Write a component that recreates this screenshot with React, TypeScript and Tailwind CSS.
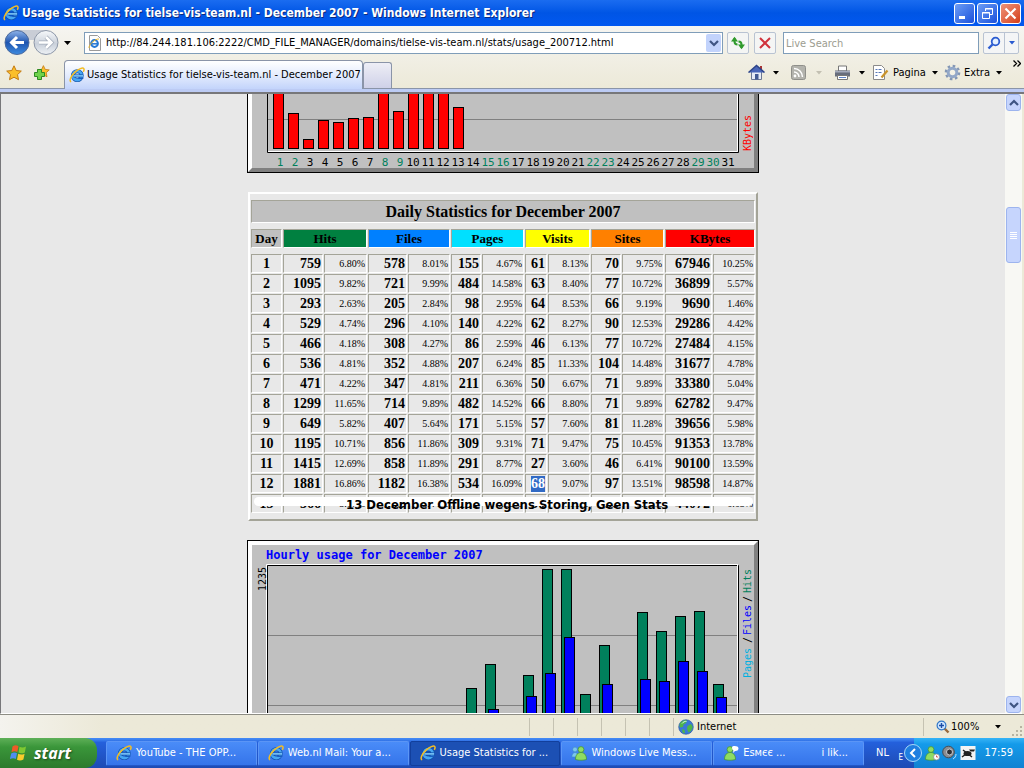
import type { ReactNode } from 'react';

const DAYS = [
  ['1', '759', '6.80%', '578', '8.01%', '155', '4.67%', '61', '8.13%', '70', '9.75%', '67946', '10.25%'],
  ['2', '1095', '9.82%', '721', '9.99%', '484', '14.58%', '63', '8.40%', '77', '10.72%', '36899', '5.57%'],
  ['3', '293', '2.63%', '205', '2.84%', '98', '2.95%', '64', '8.53%', '66', '9.19%', '9690', '1.46%'],
  ['4', '529', '4.74%', '296', '4.10%', '140', '4.22%', '62', '8.27%', '90', '12.53%', '29286', '4.42%'],
  ['5', '466', '4.18%', '308', '4.27%', '86', '2.59%', '46', '6.13%', '77', '10.72%', '27484', '4.15%'],
  ['6', '536', '4.81%', '352', '4.88%', '207', '6.24%', '85', '11.33%', '104', '14.48%', '31677', '4.78%'],
  ['7', '471', '4.22%', '347', '4.81%', '211', '6.36%', '50', '6.67%', '71', '9.89%', '33380', '5.04%'],
  ['8', '1299', '11.65%', '714', '9.89%', '482', '14.52%', '66', '8.80%', '71', '9.89%', '62782', '9.47%'],
  ['9', '649', '5.82%', '407', '5.64%', '171', '5.15%', '57', '7.60%', '81', '11.28%', '39656', '5.98%'],
  ['10', '1195', '10.71%', '856', '11.86%', '309', '9.31%', '71', '9.47%', '75', '10.45%', '91353', '13.78%'],
  ['11', '1415', '12.69%', '858', '11.89%', '291', '8.77%', '27', '3.60%', '46', '6.41%', '90100', '13.59%'],
  ['12', '1881', '16.86%', '1182', '16.38%', '534', '16.09%', '68', '9.07%', '97', '13.51%', '98598', '14.87%'],
  ['13', '566', '5.07%', '393', '5.44%', '151', '4.55%', '30', '4.00%', '50', '6.96%', '44072', '6.65%'],
];

const GROUPS = [
  { name: 'Hits', color: 'bg-[#008040]' },
  { name: 'Files', color: 'bg-[#0080ff]' },
  { name: 'Pages', color: 'bg-[#00e0ff]' },
  { name: 'Visits', color: 'bg-[#ffff00]' },
  { name: 'Sites', color: 'bg-[#ff8000]' },
  { name: 'KBytes', color: 'bg-[#ff0000]' },
];

// tops of the daily KBytes bars, bars 1, 8, 10, 11 and 12 run off the top
const DAILY_TOPS = [-4, 19, 45, 26, 28, 24, 23, -4, 17, -4, -4, -4, 13];
const WEEKEND = [1, 2, 8, 9, 15, 16, 22, 23, 29, 30];

const HOURLY = [
  { x: 219, hits: 148 },
  { x: 238, hits: 124, files: 169 },
  { x: 276, hits: 135, files: 156 },
  { x: 295, hits: 29, files: 133 },
  { x: 314, hits: 29, files: 97 },
  { x: 333, hits: 154 },
  { x: 352, hits: 105, files: 144 },
  { x: 390, hits: 72, files: 139 },
  { x: 409, hits: 91, files: 141 },
  { x: 428, hits: 76, files: 121 },
  { x: 447, hits: 71, files: 131 },
  { x: 466, hits: 144, files: 157 },
];

const MONO = '"DejaVu Sans Mono", monospace';

function IeLogo() {
  return (
    <svg width="16" height="16" viewBox="0 0 16 16" className="shrink-0" aria-hidden="true">
      <circle cx="8.3" cy="8.6" r="4.4" fill="none" stroke="#0f4fa8" strokeWidth="4" />
      <circle cx="8.3" cy="8.6" r="4.4" fill="none" stroke="#46a6f2" strokeWidth="2.8" />
      <path d="M4.500 8.900h9.300" stroke="#0f4fa8" strokeWidth="3" />
      <path d="M4.500 8.900h9.600" stroke="#7cc8fb" strokeWidth="1.600" />
      <path d="M9.500 10.800h5.200l-.6 1.200H9z" fill="#1a5cc0" />
      <path d="M2.200 14.800c-2.400-.6-.4-5.600 3.600-9.400C9.600 1.800 13.800.2 14.800 1.600c.5.8.2 2-.5 3.200" fill="none" stroke="#f3bd25" strokeWidth="1.500" />
    </svg>
  );
}

function Caret({ color = '#000' }: { color?: string }) {
  return (
    <svg width="6" height="4" viewBox="0 0 6 4" className="shrink-0" aria-hidden="true">
      <path d="M0 0h6L3 3.500z" fill={color} />
    </svg>
  );
}

function Chevron({ up = false }: { up?: boolean }) {
  return (
    <svg width="10" height="8" viewBox="0 0 10 8" aria-hidden="true">
      <path d={up ? 'M1 6l4-4 4 4' : 'M1 2l4 4 4-4'} fill="none" stroke="#3f5583" strokeWidth="2.200" />
    </svg>
  );
}

function StarShape({ x, y, scale }: { x: number; y: number; scale: number }) {
  return (
    <path
      transform={`translate(${x} ${y}) scale(${scale})`}
      d="M8 .8l2.200 4.700 5.100.6-3.800 3.500 1 5.100L8 12.200l-4.500 2.500 1-5.100L.7 6.100l5.100-.6z"
      fill="#fbbf2b"
      stroke="#c47a10"
      strokeWidth="1"
    />
  );
}

function Messenger({ pair = false, bubble = false, clock = false }: { pair?: boolean; bubble?: boolean; clock?: boolean }) {
  return (
    <svg width="16" height="16" viewBox="0 0 16 16" className="shrink-0" aria-hidden="true">
      {pair && (
        <g fill="#7cc6ee" stroke="#3a86c4" strokeWidth=".6">
          <circle cx="4" cy="4.500" r="2.400" />
          <path d="M.8 12c0-6 6.400-6 6.400 0z" />
        </g>
      )}
      <g transform={pair ? 'translate(3 0)' : ''} fill="#8fdc63" stroke="#3f9130" strokeWidth=".7">
        <circle cx="7" cy="4.500" r="2.900" />
        <path d="M1.500 14.500C1.500 9.500 4 7.500 7 7.500s5.500 2 5.500 7c-3 1-8 1-11 0z" />
      </g>
      {bubble && <path d="M9 2.500C9 .5 15.500.5 15.500 3.500c0 2-2 2.600-3.500 2.400L10 8l.5-2.600C9.500 5 9 4 9 2.500z" fill="#fff" />}
      {clock && (
        <g>
          <circle cx="12.500" cy="12" r="3" fill="#fff" stroke="#888" strokeWidth=".7" />
          <path d="M12.500 10.500V12H14" fill="none" stroke="#c33" strokeWidth=".8" />
        </g>
      )}
    </svg>
  );
}

function TitleBar() {
  return (
    <header className="flex h-[26px] shrink-0 items-center bg-linear-to-b from-[#1a6cf0] via-[#0055e5] to-[#0258f0] px-[3px]">
      <IeLogo />
      <h1 className="ml-[3px] flex-1 truncate text-[12px] font-bold text-white [text-shadow:1px_1px_0_#0a2a80]">
        Usage Statistics for tielse-vis-team.nl - December 2007 - Windows Internet Explorer
      </h1>
      <div className="flex gap-[2px]">
        <button aria-label="Minimize" className="flex size-[21px] items-center justify-center rounded-[3px] border border-white bg-linear-to-br from-[#6c9cf5] to-[#1c4fdb]">
          <svg width="15" height="15" viewBox="0 0 15 15"><path d="M2 10h6v3H2z" fill="#fff" /></svg>
        </button>
        <button aria-label="Restore" className="flex size-[21px] items-center justify-center rounded-[3px] border border-white bg-linear-to-br from-[#6c9cf5] to-[#1c4fdb]">
          <svg width="15" height="15" viewBox="0 0 15 15" fill="none" stroke="#fff">
            <path d="M5.500 5V2.500h7v6H10M5 3h8" />
            <path d="M2.500 6.500h7v6h-7zM2 7h8" />
          </svg>
        </button>
        <button aria-label="Close" className="flex size-[21px] items-center justify-center rounded-[3px] border border-white bg-linear-to-br from-[#ee9277] to-[#d33b12]">
          <svg width="15" height="15" viewBox="0 0 15 15"><path d="M2.500 2.500l10 10m0-10l-10 10" stroke="#fff" strokeWidth="2.200" /></svg>
        </button>
      </div>
    </header>
  );
}

function AddressRow() {
  return (
    <div className="flex h-[34px] shrink-0 items-center pr-[5px] pl-[4px]">
      <svg width="56" height="30" viewBox="0 0 56 30" role="img" aria-label="Back and forward" className="shrink-0">
        <defs>
          <linearGradient id="back" x1="0" y1="0" x2="0" y2="1">
            <stop offset="0" stopColor="#8fb4ea" />
            <stop offset=".5" stopColor="#1f55b0" />
            <stop offset="1" stopColor="#3d8be0" />
          </linearGradient>
          <linearGradient id="forward" x1="0" y1="0" x2="0" y2="1">
            <stop offset="0" stopColor="#f7f9fb" />
            <stop offset=".55" stopColor="#c9d0da" />
            <stop offset="1" stopColor="#eef2f6" />
          </linearGradient>
        </defs>
        <path d="M13 2h29v10H13z" fill="#c9cdd6" />
        <circle cx="13" cy="14.500" r="12" fill="url(#back)" stroke="#4d6a9c" />
        <circle cx="42" cy="14.500" r="12" fill="url(#forward)" stroke="#8d97a8" />
        <path d="M20 14.500H8m5-5.500l-5.500 5.500L13 20" fill="none" stroke="#fff" strokeWidth="3" />
        <path d="M35 14.500h12M42 9l5.500 5.500L42 20" fill="none" stroke="#a3acba" strokeWidth="4" />
        <path d="M35 14.500h12M42 9l5.500 5.500L42 20" fill="none" stroke="#fff" strokeWidth="2.500" />
      </svg>
      <button aria-label="Recent pages" className="flex w-[14px] justify-center">
        <svg width="7" height="4" viewBox="0 0 7 4"><path d="M0 0h7L3.500 4z" /></svg>
      </button>
      <div className="ml-[10px] flex h-[22px] flex-1 items-center border border-[#7f9db9] bg-white pr-px pl-[2px]">
        <svg width="16" height="16" viewBox="0 0 16 16" className="mr-[3px] shrink-0" aria-hidden="true">
          <path d="M2.500.5h8l3 3v12h-11z" fill="#fdfdfd" stroke="#9a9a9a" />
          <circle cx="7.500" cy="8.500" r="3.400" fill="none" stroke="#2477d4" strokeWidth="2" />
          <path d="M5 8.800h5.800" stroke="#2477d4" strokeWidth="1.500" />
          <path d="M2 13c-.5-3 6-9.500 10-9" fill="none" stroke="#e8b62e" />
        </svg>
        <input
          aria-label="Address"
          className="min-w-0 flex-1 bg-transparent text-[11px] text-black outline-none"
          defaultValue="http://84.244.181.106:2222/CMD_FILE_MANAGER/domains/tielse-vis-team.nl/stats/usage_200712.html"
        />
        <button aria-label="Show addresses" className="flex h-[18px] w-[15px] items-center justify-center rounded-[2px] bg-[#c2d3fc]">
          <Chevron />
        </button>
      </div>
      <button aria-label="Refresh" className="ml-[4px] flex size-[22px] items-center justify-center rounded-[2px] border border-[#b9c3d2] bg-[#f4f5f4]">
        <svg width="16" height="14" viewBox="0 0 16 14" fill="none" stroke="#2f9a2c" strokeWidth="2">
          <path d="M4.500 2v3.500c0 2 1 3 3 3" />
          <path d="M1 5.500L4.500.8 8 5.500z" fill="#2f9a2c" stroke="none" />
          <path d="M11.500 12V8.500c0-2-1-3-3-3" />
          <path d="M8 8.500l3.500 4.700L15 8.500z" fill="#2f9a2c" stroke="none" />
        </svg>
      </button>
      <button aria-label="Stop" className="ml-[5px] flex size-[22px] items-center justify-center rounded-[2px] border border-[#b9c3d2] bg-[#f4f5f4]">
        <svg width="14" height="14" viewBox="0 0 14 14"><path d="M2 2l10 10M12 2L2 12" stroke="#d0323c" strokeWidth="2" /></svg>
      </button>
      <input
        aria-label="Live Search"
        placeholder="Live Search"
        className="ml-[7px] h-[22px] w-[196px] border border-[#7f9db9] bg-white px-[2px] text-[11px] outline-none placeholder:text-[#9c9c90]"
      />
      <div className="ml-[4px] flex h-[22px] w-[36px] rounded-[2px] border border-[#b9c3d2] bg-[#f4f5f6]">
        <button aria-label="Search" className="flex w-[21px] items-center justify-center border-r border-[#b9c3d2]">
          <svg width="14" height="14" viewBox="0 0 14 14" fill="none" stroke="#2a5bd0">
            <circle cx="8.500" cy="5.500" r="3.800" strokeWidth="1.800" fill="#e4f0ff" />
            <path d="M5.500 8.500L1.500 12.500" strokeWidth="2.400" />
          </svg>
        </button>
        <button aria-label="Search options" className="flex flex-1 items-center justify-center"><Caret color="#2a5bd0" /></button>
      </div>
    </div>
  );
}

function TabRow() {
  return (
    <div className="flex h-[29px] shrink-0 items-end border-b border-[#8a94a8]">
      <div className="flex h-[28px] items-center gap-[10px] pb-[3px] pl-[6px]">
        <button aria-label="Favorites">
          <svg width="17" height="16" viewBox="0 0 17 16"><StarShape x={0} y={0} scale={1} /></svg>
        </button>
        <button aria-label="Add to favorites">
          <svg width="17" height="16" viewBox="0 0 17 16">
            <StarShape x={4} y={0} scale={0.8} />
            <path d="M4.500 4.500h4v3h3v4h-3v3h-4v-3h-3v-4h3z" fill="#6fd24a" stroke="#2c8a22" />
          </svg>
        </button>
      </div>
      <div className="-mb-px ml-[14px] flex h-[29px] w-[299px] items-center gap-[2px] rounded-t-[4px] border border-b-0 border-[#8a94a8] bg-linear-to-b from-white via-[#e4ecfd] to-[#c3d4fb] pl-[4px]">
        <IeLogo />
        <a href="#stats" className="truncate text-[11px] text-black">Usage Statistics for tielse-vis-team.nl - December 2007</a>
      </div>
      <button aria-label="New tab" className="h-[26px] w-[29px] rounded-t-[3px] border border-b-0 border-[#8a94a8] bg-linear-to-b from-[#eeeef6] to-[#cfd1e8]" />
      <div className="ml-auto flex h-[28px] items-center pb-[3px] text-[11px]">
        <button aria-label="Home" className="flex items-center gap-[8px]">
          <svg width="17" height="17" viewBox="0 0 17 17">
            <path d="M3.500 7.500h10v8h-10z" fill="#e7ecf6" stroke="#6c7894" />
            <path d="M12 2h2v4h-2z" fill="#a33" />
            <path d="M.5 8.500L8.500 1.500l8 7" fill="#4a66b8" stroke="#2d4488" strokeWidth="1.500" />
            <path d="M7 10h3.500v5.500H7z" fill="#435a92" />
          </svg>
          <Caret />
        </button>
        <button aria-label="Feeds" className="ml-[12px] flex items-center gap-[10px]">
          <svg width="15" height="15" viewBox="0 0 15 15">
            <rect x=".5" y=".5" width="14" height="14" rx="2" fill="#b3b3ad" stroke="#8f8f8a" />
            <circle cx="4" cy="11" r="1.400" fill="#fff" />
            <path d="M3 7a5 5 0 0 1 5 5M3 3.500a8.500 8.500 0 0 1 8.500 8.500" fill="none" stroke="#fff" strokeWidth="1.500" />
          </svg>
          <Caret color="#c3c0b2" />
        </button>
        <button aria-label="Print" className="ml-[12px] flex items-center gap-[8px]">
          <svg width="17" height="16" viewBox="0 0 17 16">
            <path d="M4.500 1h8v5h-8z" fill="#fff" stroke="#777" />
            <path d="M1 5.500h15v6H1z" fill="#676d7c" />
            <path d="M1 6h15v1.500H1z" fill="#a4aabb" />
            <path d="M3.500 10.500h10v4h-10z" fill="#fff" stroke="#777" />
            <path d="M5 12.500h7" stroke="#5d83c8" />
          </svg>
          <Caret />
        </button>
        <button className="ml-[7px] flex items-center">
          <svg width="17" height="17" viewBox="0 0 17 17" className="mr-[4px]">
            <path d="M1.500 1.500h8l3 3v11h-11z" fill="#fff" stroke="#8a8a8a" />
            <path d="M3.500 5.500h2m1 0h3m-6 3h2m1 0h3m-6 3h2" stroke="#5878b8" />
            <path d="M15.500 6.500l-6 7" stroke="#c9932b" strokeWidth="2.200" />
          </svg>
          Pagina
          <span className="ml-[6px]"><Caret /></span>
        </button>
        <button className="ml-[6px] flex items-center">
          <svg width="17" height="17" viewBox="0 0 17 17" className="mr-[3px]">
            <circle cx="8.500" cy="8.500" r="6.600" fill="none" stroke="#8396b4" strokeWidth="2.400" strokeDasharray="2.600 2.580" />
            <circle cx="8.500" cy="8.500" r="4.300" fill="#f4f2e6" stroke="#93a8c8" strokeWidth="3" />
          </svg>
          Extra
          <span className="ml-[6px]"><Caret /></span>
        </button>
        <button aria-label="More commands" className="mr-[3px] ml-[11px] self-start">
          <svg width="8" height="7" viewBox="0 0 8 7" fill="none" stroke="#000" strokeWidth="1.300"><path d="M.5.5l3 3-3 3m4-6l3 3-3 3" /></svg>
        </button>
      </div>
    </div>
  );
}

function DailyChart() {
  return (
    <svg width="512" height="79" viewBox="0 0 512 79" className="shrink-0" role="img" aria-label="Daily usage in KBytes" fontFamily={MONO}>
      <path d="M0 0h512v79H0z" fill="#000" />
      <path d="M1 0h510v78H1z" fill="#808080" />
      <path d="M1 0h4v74l-4 4z" fill="#fff" />
      <path d="M5 0h502v74H5z" fill="#c0c0c0" />
      <path d="M20.500 -1v59.500h471V-1" fill="none" stroke="#000" />
      <path d="M21 57.500h469.500V-1" fill="none" stroke="#fff" />
      <path d="M21 25.500h469" stroke="#808080" />
      {DAILY_TOPS.map((top, i) => (
        <rect key={i} x={26.5 + i * 15} y={top + 0.5} width="10" height={54 - top} fill="#f00" stroke="#000" />
      ))}
      {Array.from({ length: 31 }, (_, i) => i + 1).map((day) => (
        <text key={day} x={25 + (day - 1) * 15 + (day < 10 ? 8 : 6)} y="72" textAnchor="middle" fontSize="11" fill={WEEKEND.includes(day) ? '#00805c' : '#000'}>
          {day}
        </text>
      ))}
      <text transform="translate(504 57) rotate(-90)" fontSize="10" fill="#f00">KBytes</text>
    </svg>
  );
}

function HourlyChart() {
  return (
    <svg width="512" height="256" viewBox="0 0 512 256" className="shrink-0" role="img" aria-label="Hourly usage" fontFamily={MONO}>
      <path d="M0 0h512v256H0z" fill="#000" />
      <path d="M1 1h510v254H1z" fill="#808080" />
      <path d="M1 1h510l-4 4H5v247l-4 3z" fill="#fff" />
      <path d="M5 5h502v246H5z" fill="#c0c0c0" />
      <path d="M19.500 256V24.500h471" fill="none" stroke="#fff" />
      <path d="M20.500 256V25.500h471V256" fill="none" stroke="#000" />
      <path d="M490.500 24v232" stroke="#fff" />
      <path d="M21 95.500h469M21 165.500h469" stroke="#808080" />
      {HOURLY.map((bar) => (
        <g key={bar.x} stroke="#000">
          <rect x={bar.x + 0.5} y={bar.hits + 0.5} width="10" height={230 - bar.hits} fill="#00805c" />
          {bar.files && <rect x={bar.x + 3.5} y={bar.files + 0.5} width="10" height={230 - bar.files} fill="#00f" />}
        </g>
      ))}
      <text x="19" y="19" fontSize="12" fontWeight="700" fill="#00f">Hourly usage for December 2007</text>
      <text transform="translate(19 51) rotate(-90)" fontSize="10">1235</text>
      <g fontSize="10">
        <text transform="translate(504 138) rotate(-90)" fill="#00b0e0">Pages</text>
        <text transform="translate(504 103) rotate(-90)">/</text>
        <text transform="translate(504 95) rotate(-90)" fill="#00f">Files</text>
        <text transform="translate(504 62) rotate(-90)">/</text>
        <text transform="translate(504 53) rotate(-90)" fill="#00805c">Hits</text>
      </g>
    </svg>
  );
}

function Spacer() {
  return (
    <tr>
      <td colSpan={13} className="h-[4px] p-0" />
    </tr>
  );
}

const CELL = 'h-[19px] border border-t-[#a4a498] border-r-white border-b-white border-l-[#a4a498] py-0 pr-px pl-px leading-[17px]';

function DailyTable() {
  return (
    <div className="relative">
      <table className="w-[510px] table-fixed border-separate border-spacing-px border-2 border-t-white border-r-[#a4a498] border-b-[#a4a498] border-l-white font-['Liberation_Serif',serif] text-black">
        <colgroup>
          <col className="w-[31px]" />
          <col className="w-[40px]" />
          <col className="w-[43px]" />
          <col className="w-[39px]" />
          <col className="w-[42px]" />
          <col className="w-[30px]" />
          <col className="w-[42px]" />
          <col className="w-[22px]" />
          <col className="w-[42px]" />
          <col className="w-[30px]" />
          <col className="w-[42px]" />
          <col className="w-[47px]" />
          <col className="w-[42px]" />
        </colgroup>
        <tbody>
          <Spacer />
          <tr>
            <th colSpan={13} className="h-[23px] border border-t-[#a4a498] border-r-white border-b-white border-l-[#a4a498] bg-[#c0c0c0] p-0 text-[16px] leading-[21px]">
              Daily Statistics for December 2007
            </th>
          </tr>
          <Spacer />
          <tr>
            <th className={`${CELL} bg-[#c0c0c0] text-[13px]`}>Day</th>
            {GROUPS.map((g) => (
              <th key={g.name} colSpan={2} className={`${CELL} ${g.color} text-[13px]`}>{g.name}</th>
            ))}
          </tr>
          <Spacer />
          {DAYS.map((row) => (
            <tr key={row[0]}>
              {row.map((value, i) => {
                if (i === 0) return <th key={i} className={`${CELL} text-[14px]`}>{value}</th>;
                if (i % 2 === 0) return <td key={i} className={`${CELL} text-right text-[10px]`}>{value}</td>;
                return (
                  <td key={i} className={`${CELL} text-right text-[14px] font-bold`}>
                    {row[0] === '12' && i === 7 ? <span className="inline-block h-[16px] bg-[#316ac5] leading-[16px] text-white">{value}</span> : value}
                  </td>
                );
              })}
            </tr>
          ))}
          <Spacer />
        </tbody>
      </table>
      {/* note painted over the row of the 13th */}
      <div className="absolute right-[5px] bottom-[12px] left-[6px] h-[12px]">
        <div className="h-[9px] w-full rounded-full bg-white" />
        <p className="absolute top-px left-[92px] text-[13px] leading-[14px] font-bold whitespace-nowrap text-black">
          13 December Offline wegens Storing, Geen Stats
        </p>
      </div>
    </div>
  );
}

function Scrollbar() {
  return (
    <div className="flex w-[17px] shrink-0 flex-col bg-[#f8f8f4] px-px">
      <button aria-label="Scroll up" className="flex h-[17px] items-center justify-center rounded-[3px] border border-[#9db4ee] bg-[#c6d5fd]">
        <Chevron up />
      </button>
      <div className="h-[96px] shrink-0" />
      <div className="flex h-[56px] flex-col items-center justify-center gap-px rounded-[3px] border border-[#9db4ee] bg-[#c6d5fd]">
        <div className="h-px w-[7px] bg-white" />
        <div className="h-px w-[7px] bg-white" />
        <div className="h-px w-[7px] bg-white" />
        <div className="h-px w-[7px] bg-white" />
      </div>
      <button aria-label="Scroll down" className="mt-auto flex h-[17px] items-center justify-center rounded-[3px] border border-[#9db4ee] bg-[#c6d5fd]">
        <Chevron />
      </button>
    </div>
  );
}

function StatusBar() {
  return (
    <div className="flex h-[24px] shrink-0 items-center border-t border-[#8d8d84] bg-linear-to-r from-[#f4f3ee] to-[#ece9d8] to-10% text-[11px]">
      <div className="ml-auto flex h-[18px]">
        {[0, 1, 2, 3, 4, 5].map((i) => (
          <div key={i} className="w-[24px] border-l border-[#c5c2b2]" />
        ))}
      </div>
      <div className="flex h-[18px] w-[250px] items-center gap-[3px] border-l border-[#c5c2b2] pl-[4px]">
        <svg width="16" height="16" viewBox="0 0 16 16" aria-hidden="true">
          <circle cx="8" cy="8" r="7.300" fill="#3a78d8" stroke="#25509c" strokeWidth=".6" />
          <path d="M3 3c2-1.800 5-2 6-1.500L8 4 5.500 5.500 5 8 2 8.500C1 7 1.500 4.500 3 3zM9.500 7l3.500-2 1.800 3-1.800 4-2.500 1.500L9 10zM4 10l2.500 1L7 14.500 4.500 13.500z" fill="#4fb54a" />
          <path d="M4 4.500c1-1.500 3-2.500 4.500-2" stroke="#dff" fill="none" strokeWidth=".9" />
        </svg>
        Internet
      </div>
      <button className="flex h-[18px] w-[80px] items-center border-l border-[#c5c2b2] pl-[12px]">
        <svg width="14" height="14" viewBox="0 0 14 14" className="mr-px">
          <path d="M8 8l4.500 4.500" stroke="#9a6a3a" strokeWidth="2.400" />
          <circle cx="5.500" cy="5.500" r="4.400" fill="#cfe6ff" stroke="#2f76c8" strokeWidth="1.200" />
          <path d="M5.500 3v5M3 5.500h5" stroke="#1d4fa8" strokeWidth="1.400" />
        </svg>
        100%
        <span className="mr-[2px] ml-auto"><Caret /></span>
      </button>
      <svg width="21" height="14" viewBox="0 0 21 14" className="self-end" fill="#b8b4a2" aria-hidden="true">
        <path d="M17 2h2v2h-2zM17 6h2v2h-2zM17 10h2v2h-2zM13 6h2v2h-2zM13 10h2v2h-2zM9 10h2v2H9z" />
      </svg>
    </div>
  );
}

function Task({ icon, active = false, children }: { icon: ReactNode; active?: boolean; children: ReactNode }) {
  return (
    <button
      className={`flex h-[25px] min-w-0 flex-1 items-center gap-[4px] rounded-[2px] border px-[9px] text-left text-[11px] whitespace-nowrap text-white ${
        active ? 'border-[#123f9c] bg-[#1c50b4]' : 'border-[#5b95f6] border-b-[#2257c8] bg-linear-to-b from-[#4a8cf8] to-[#3574ea]'
      }`}
    >
      {icon}
      {children}
    </button>
  );
}

function Taskbar() {
  return (
    <footer className="flex h-[30px] shrink-0 items-center bg-linear-to-b from-[#4288f4] from-3% via-[#2460dc] via-15% to-[#1e4bb4] text-[11px] text-white">
      <button className="flex h-[30px] w-[97px] items-center gap-[6px] rounded-r-[12px] bg-linear-to-b from-[#5eb058] via-[#3a963a] via-30% to-[#2c7a2c] pl-[10px] font-['Open_Sans',sans-serif] text-[16px] font-bold italic [text-shadow:1px_1px_2px_#1c4a1c]">
        <svg width="18" height="18" viewBox="0 0 18 18" className="shrink-0" aria-hidden="true">
          <path d="M2.500 2.500C4.500 1 6.500 1 8.500 2.200L7.300 8C5.500 7 3.500 7 1.500 8.200z" fill="#ee5a28" />
          <path d="M9.500 2.800c2 1 4 1 6.500-.2l-1.200 5.800c-2.200 1.200-4.300 1.200-6.300.2z" fill="#7fc832" />
          <path d="M1.200 9.500c2-1.200 4-1.200 5.800-.2l-1.200 5.700c-2-1.200-4-1-6 .2z" fill="#4f8df0" />
          <path d="M8.200 9.800c2 1 4 1 6.400-.1L13.400 15.500c-2.200 1.200-4.400 1.200-6.400.2z" fill="#f8cc2c" />
        </svg>
        start
      </button>
      <nav className="ml-[9px] flex min-w-0 flex-1 gap-px">
        <Task icon={<IeLogo />}>YouTube - THE OPP...</Task>
        <Task icon={<IeLogo />}>Web.nl Mail: Your a...</Task>
        <Task active icon={<IeLogo />}>Usage Statistics for ...</Task>
        <Task icon={<Messenger pair />}>Windows Live Mess...</Task>
        <Task icon={<Messenger bubble />}>
          <span>Esмєє ...</span>
          <span className="mr-[6px] ml-auto">i lik...</span>
        </Task>
      </nav>
      <div className="flex h-[20px] w-[50px] items-center justify-between pr-[11px] pl-[12px]">
        NL
        <span className="self-end text-[8px] leading-[10px]">E</span>
      </div>
      <div className="flex h-[30px] w-[110px] items-center bg-linear-to-b from-[#35b4f6] via-[#149bea] via-20% to-[#1182d2]">
        <button aria-label="Show hidden icons" className="-ml-[10px] flex size-[18px] items-center justify-center rounded-full border border-[#a9d8f8] bg-[#1f7fe0]">
          <svg width="8" height="10" viewBox="0 0 8 10"><path d="M6 1L2 5l4 4" fill="none" stroke="#fff" strokeWidth="2" /></svg>
        </button>
        <div className="ml-[2px] flex gap-[2px]">
          <Messenger clock />
          <svg width="16" height="16" viewBox="0 0 16 16" aria-hidden="true">
            <circle cx="6.500" cy="7" r="5.800" fill="#8a8d92" stroke="#4a4c50" />
            <circle cx="7.500" cy="7" r="3" fill="#2e3034" stroke="#c8cace" />
            <path d="M11 14c2-1 3-3 3-5" fill="none" stroke="#bfe4ff" />
          </svg>
          <svg width="16" height="16" viewBox="0 0 16 16" aria-hidden="true">
            <path d="M.5 1h15v14H.5z" fill="#f4f4f4" />
            <path d="M9 4.500h6l-1 2h-3.500z" fill="#222" />
            <ellipse cx="7.500" cy="8.500" rx="4" ry="2.600" fill="#222" />
            <path d="M3 5l9 7M2 12l4-3" stroke="#222" strokeWidth="1.500" />
          </svg>
        </div>
        <time className="mr-[11px] ml-auto">17:59</time>
      </div>
    </footer>
  );
}

export default function App() {
  return (
    <div className="flex h-screen flex-col overflow-hidden bg-[#ece9d8] font-['DejaVu_Sans_Condensed','DejaVu_Sans',sans-serif] leading-[14px] text-black">
      <TitleBar />
      <div className="bg-linear-to-b from-[#f6f5f1] to-[#ece9d8]">
        <AddressRow />
        <TabRow />
      </div>
      <div className="h-[5px] shrink-0 border-b-2 border-[#77777a] bg-[#bccbf4]" />
      <div className="mr-[2px] flex min-h-0 flex-1 border-b border-l border-b-white border-l-[#77777a]">
        <main id="stats" className="flex min-w-0 flex-1 flex-col items-center gap-[19px] overflow-hidden bg-[#e8e8e8]">
          <DailyChart />
          <DailyTable />
          <HourlyChart />
        </main>
        <Scrollbar />
      </div>
      <StatusBar />
      <Taskbar />
    </div>
  );
}
